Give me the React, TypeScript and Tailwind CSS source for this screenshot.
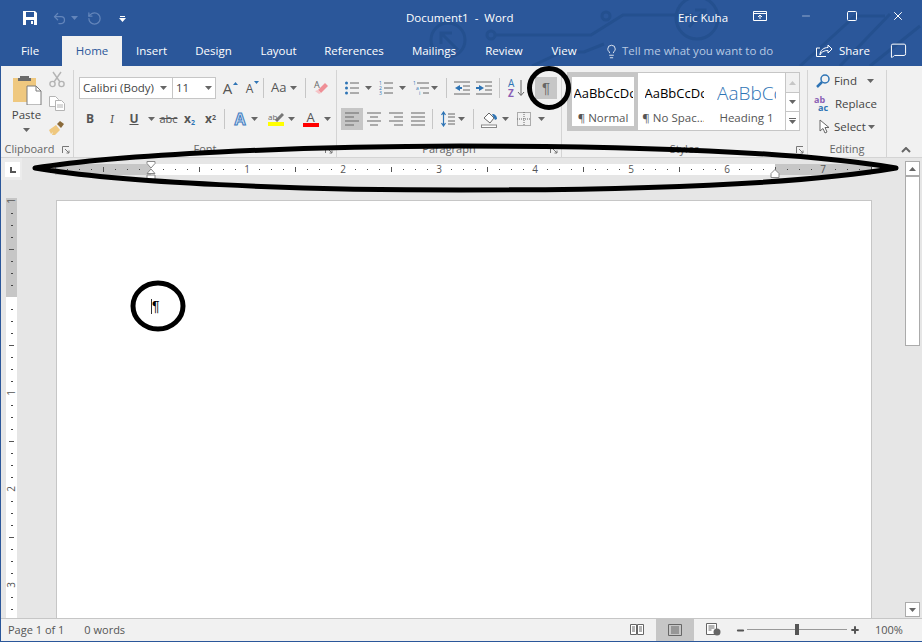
import React from 'react';
import { Undo2, RotateCcw, Lightbulb, MessageSquare, Minus, Plus, Square, X } from 'lucide-react';

const TABS = [
  { name: 'Insert', width: 'w-[59px]' },
  { name: 'Design', width: 'w-[65px]' },
  { name: 'Layout', width: 'w-[65px]' },
  { name: 'References', width: 'w-[86px]' },
  { name: 'Mailings', width: 'w-[74px]' },
  { name: 'Review', width: 'w-[66px]' },
  { name: 'View', width: 'w-[54px]' },
];

const Caret = ({ className = 'text-[#666]' }: { className?: string }) => (
  <svg width="7" height="4" viewBox="0 0 7 4" className={`shrink-0 ${className}`}>
    <path d="M0 0h7L3.5 4z" fill="currentColor" />
  </svg>
);

const Launcher = () => (
  <svg width="8" height="8" viewBox="0 0 8 8" className="shrink-0">
    <path d="M.5 7V.5H7M3 3l4 4M4.5 7H7V4.5" fill="none" stroke="#777" />
  </svg>
);

const Divider = ({ className = 'h-[22px]' }: { className?: string }) => <div className={`w-px bg-[#c6c6c6] shrink-0 ${className}`} />;

const Lines = ({ widths, width = 14 }: { widths: [number, number][]; width?: number }) => (
  <svg width={width} height="14" viewBox={`0 0 ${width} 14`}>
    {widths.map(([x, w], i) => (
      <rect key={i} x={x} y={1 + i * (12 / (widths.length - 1)) - 0.5} width={w} height="1" fill="#666" />
    ))}
  </svg>
);

const RibbonGroup = ({ label, width, launcher, labelClass = '', children }: { label: string; width: string; launcher?: boolean; labelClass?: string; children: React.ReactNode }) => (
  <div className={`${width} h-[88px] shrink-0 flex flex-col border-r border-[#d4d4d4] mt-[4px] relative`}>
    <div className="flex-1 min-h-0">{children}</div>
    <div className={`h-[17px] flex items-center justify-center text-[11px] text-[#666] ${labelClass}`}>{label}</div>
    {launcher && (
      <div className="absolute right-[3px] bottom-[4px] flex">
        <Launcher />
      </div>
    )}
  </div>
);

const Ruler = () => {
  const marks = [];
  for (let i = 0; i <= 68; i++) {
    const x = 12 * i;
    if (i === 0) continue;
    if (i % 8 === 0) continue;
    marks.push(i % 4 === 0 ? <rect key={i} x={x} y="3" width="1" height="5" fill="#555" /> : <rect key={i} x={x} y="5" width="1" height="1" fill="#444" />);
  }
  return (
    <svg width="816" height="11" viewBox="0 0 816 11" className="block overflow-visible">
      {marks}
      <text x="0" y="9" fontSize="10" fill="#555" textAnchor="middle">1</text>
      {[1, 2, 3, 4, 5, 6, 7].map(n => (
        <text key={n} x={96 + n * 96} y="9" fontSize="10" fill="#555" textAnchor="middle">{n}</text>
      ))}
    </svg>
  );
};

const VerticalRuler = () => {
  const marks = [];
  for (let i = 1; i <= 36; i++) {
    const y = 3 + 12 * i;
    if (i % 8 === 0) continue;
    marks.push(i % 4 === 0 ? <rect key={i} x="3" y={y} width="5" height="1" fill="#555" /> : <rect key={i} x="5" y={y} width="2" height="1" fill="#444" />);
  }
  return (
    <svg width="11" height="421" viewBox="0 0 11 421" className="block overflow-visible">
      {marks}
      {[1, 2, 3].map(n => (
        <text key={n} x="0" y="0" fontSize="10" fill="#555" textAnchor="middle" transform={`translate(9 ${99 + n * 96}) rotate(-90)`}>{n}</text>
      ))}
      <text x="0" y="0" fontSize="10" fill="#555" textAnchor="middle" transform="translate(9 3) rotate(-90)">1</text>
    </svg>
  );
};

const Clipboard = () => (
  <RibbonGroup label="Clipboard" width="w-[73px]" launcher labelClass="pr-[15px]">
    <div className="flex h-full">
      <div className="w-[45px] flex flex-col items-center pt-[5px] pl-[6px]">
        <svg width="30" height="30" viewBox="0 0 30 30">
          <path d="M1 3h23v24H1z" fill="#efc87f" />
          <path d="M8 3V1h9v2h2v3H6V3z" fill="#6b6b6b" />
          <path d="M15 11h9l5 5v14H15z" fill="#fff" stroke="#7a7a7a" />
          <path d="M24 11v5h5" fill="none" stroke="#7a7a7a" />
        </svg>
        <div className="text-[11.5px] leading-[16px] mt-[2px] text-[#444]">Paste</div>
        <div className="mt-[5px]"><Caret /></div>
      </div>
      <div className="flex flex-col items-center pl-[3px] pt-[1px]">
        <svg width="16" height="17" viewBox="0 0 16 17" fill="none" stroke="#b4b4b4" strokeWidth="1.4">
          <circle cx="3.5" cy="13" r="2.6" />
          <circle cx="12.5" cy="13" r="2.6" />
          <path d="M5 11 12 1M11 11 4 1" />
        </svg>
        <svg width="16" height="15" viewBox="0 0 16 15" fill="#fff" stroke="#b4b4b4" className="mt-[8px]">
          <path d="M.5.5h6l3 3v7H.5z" />
          <path d="M6.5 4.5h6l3 3v7h-9z" />
          <path d="M8 9h6M8 11h6" />
        </svg>
        <svg width="16" height="15" viewBox="0 0 16 15" className="mt-[9px]">
          <path d="M0 10 7 5l4 5-5 5H3l1-3-2 2z" fill="#efc87f" />
          <path d="M8 4l3-3 4 3-3 4z" fill="#8a6a3a" />
        </svg>
      </div>
    </div>
  </RibbonGroup>
);

const Font = () => (
  <RibbonGroup label="Font" width="w-[263px]" launcher>
    <div className="flex items-center h-[22px] mt-[7px] pl-[5px]">
      <div className="w-[94px] h-[22px] bg-white border border-[#c6c6c6] flex items-center pl-[3px] pr-[5px] justify-between text-[11.5px] text-[#444]">
        <span>Calibri (Body)</span><Caret />
      </div>
      <div className="w-[43px] h-[22px] bg-white border border-[#c6c6c6] border-l-0 flex items-center pl-[3px] pr-[3px] justify-between text-[11.5px] text-[#444]">
        <span>11</span><Caret />
      </div>
      <div className="w-[23px] text-center text-[15px] leading-none text-[#555] relative">
        A
        <svg width="5" height="3" viewBox="0 0 5 3" className="absolute right-[1px] top-[1px]"><path d="M0 3h5L2.500 0z" fill="#2e74b5" /></svg>
      </div>
      <div className="w-[21px] text-center text-[12px] leading-none text-[#555] relative mt-[2px]">
        A
        <svg width="5" height="3" viewBox="0 0 5 3" className="absolute right-[1px] top-[-2px]"><path d="M0 0h5L2.500 3z" fill="#2e74b5" /></svg>
      </div>
      <Divider className="h-[20px] ml-[3px]" />
      <span className="ml-[7px] text-[13px] text-[#555]">Aa</span>
      <span className="ml-[4px]"><Caret /></span>
      <Divider className="h-[20px] ml-[8px]" />
      <svg width="16" height="16" viewBox="0 0 16 16" className="ml-[8px] overflow-visible">
        <path d="M7 13 14 6l-3-3-7 7z" fill="#ef8f96" />
        <path d="M1 11l3-1 3 3-2 1z" fill="#f5c3c6" />
        <text x="0" y="8" fontSize="9" fill="#666">A</text>
      </svg>
    </div>
    <div className="flex items-center h-[22px] mt-[9px] pl-[5px] text-[#555]">
      <span className="w-[22px] text-center text-[12px] font-bold">B</span>
      <span className="w-[22px] text-center text-[12px] italic font-serif">I</span>
      <span className="w-[22px] text-center text-[12px] font-bold underline">U</span>
      <span className="ml-[3px] mr-[3px]"><Caret /></span>
      <span className="w-[21px] text-center text-[11px] line-through">abc</span>
      <span className="w-[21px] text-center text-[12px] font-bold">x<sub className="text-[7px] text-[#2e74b5]">2</sub></span>
      <span className="w-[21px] text-center text-[12px] font-bold">x<sup className="text-[7px]">2</sup></span>
      <Divider className="h-[20px] ml-[3px]" />
      <span className="ml-[8px] w-[14px] text-center text-[16px] font-bold leading-none text-[#cfe0f3] [-webkit-text-stroke:1px_#3f7cc0]">A</span>
      <span className="ml-[4px]"><Caret /></span>
      <div className="ml-[9px] w-[17px] flex flex-col items-center">
        <svg width="16" height="10" viewBox="0 0 16 10"><text x="0" y="8" fontSize="8" fill="#666">ab</text><path d="M8 9l7-7" stroke="#777" strokeWidth="3" /></svg>
        <div className="w-[16px] h-[4px] bg-[#ffff00]" />
      </div>
      <span className="ml-[4px]"><Caret /></span>
      <div className="ml-[7px] w-[17px] flex flex-col items-center">
        <span className="text-[13px] leading-[11px] text-[#555]">A</span>
        <div className="w-[16px] h-[4px] bg-[#ff0000]" />
      </div>
      <span className="ml-[5px]"><Caret /></span>
    </div>
  </RibbonGroup>
);

const Paragraph = () => (
  <RibbonGroup label="Paragraph" width="w-[225px]" launcher>
    <div className="flex items-center h-[22px] mt-[7px] pl-[8px]">
      <svg width="14" height="14" viewBox="0 0 14 14">
        <circle cx="1.500" cy="2" r="1.500" fill="#2e74b5" /><circle cx="1.500" cy="7" r="1.500" fill="#2e74b5" /><circle cx="1.500" cy="12" r="1.500" fill="#2e74b5" />
        <path d="M5 2h9M5 7h9M5 12h9" stroke="#666" />
      </svg>
      <span className="ml-[6px]"><Caret /></span>
      <svg width="14" height="14" viewBox="0 0 14 14" className="ml-[7px] overflow-visible">
        <text x="0" y="4" fontSize="5" fill="#2e74b5">1</text><text x="0" y="9" fontSize="5" fill="#2e74b5">2</text><text x="0" y="14" fontSize="5" fill="#2e74b5">3</text>
        <path d="M5 2h9M5 7h9M5 12h9" stroke="#666" />
      </svg>
      <span className="ml-[6px]"><Caret /></span>
      <svg width="16" height="14" viewBox="0 0 16 14" className="ml-[7px] overflow-visible">
        <text x="0" y="4" fontSize="5" fill="#2e74b5">1</text><text x="3" y="9" fontSize="5" fill="#2e74b5">a</text><text x="6" y="14" fontSize="5" fill="#2e74b5">i</text>
        <path d="M4 2h12M7 7h9M10 12h6" stroke="#666" />
      </svg>
      <span className="ml-[2px]"><Caret /></span>
      <Divider className="h-[20px] ml-[8px]" />
      <svg width="16" height="14" viewBox="0 0 16 14" className="ml-[7px]">
        <path d="M6 4 1 7l5 3z" fill="#2e74b5" /><path d="M3 7h5" stroke="#2e74b5" strokeWidth="2" />
        <path d="M0 1h16M9 5h7M9 9h7M0 13h16" stroke="#666" />
      </svg>
      <svg width="16" height="14" viewBox="0 0 16 14" className="ml-[6px]">
        <path d="M3 4l5 3-5 3z" fill="#2e74b5" /><path d="M0 7h5" stroke="#2e74b5" strokeWidth="2" />
        <path d="M0 1h16M9 5h7M9 9h7M0 13h16" stroke="#666" />
      </svg>
      <Divider className="h-[20px] ml-[7px]" />
      <div className="ml-[8px] w-[17px] h-[22px] relative flex">
        <svg width="17" height="20" viewBox="0 0 17 20" className="mt-[1px] overflow-visible">
          <text x="0" y="9" fontSize="10" fill="#2e74b5">A</text>
          <text x="0" y="19" fontSize="10" fontWeight="bold" fill="#8a5fb5">Z</text>
          <path d="M13 2v15M10 14l3 3.500 3-3.500" fill="none" stroke="#666" />
        </svg>
      </div>
      <div className="ml-[10px] w-[22px] h-[22px] bg-[#c6c6c6] flex items-center justify-center font-['Liberation_Sans',sans-serif] text-[15px] text-[#666]">¶</div>
    </div>
    <div className="flex items-center h-[22px] mt-[9px] pl-[4px]">
      <div className="w-[22px] h-[22px] bg-[#c6c6c6] flex items-center justify-center">
        <Lines widths={[[0, 14], [0, 9], [0, 14], [0, 9]]} />
      </div>
      <div className="w-[22px] flex justify-center"><Lines widths={[[0, 14], [3, 8], [0, 14], [3, 8]]} /></div>
      <div className="w-[22px] flex justify-center"><Lines widths={[[0, 14], [5, 9], [0, 14], [5, 9]]} /></div>
      <div className="w-[22px] flex justify-center"><Lines widths={[[0, 14], [0, 14], [0, 14], [0, 14]]} /></div>
      <Divider className="h-[20px] ml-[3px]" />
      <svg width="14" height="16" viewBox="0 0 14 16" className="ml-[8px]">
        <path d="M2.500 1v14M.5 4l2-3 2 3M.5 12l2 3 2-3" fill="none" stroke="#2e74b5" strokeWidth="1.200" />
        <path d="M7 3h7M7 6h7M7 10h7M7 13h7" stroke="#666" />
      </svg>
      <span className="ml-[3px]"><Caret /></span>
      <Divider className="h-[20px] ml-[8px]" />
      <svg width="17" height="17" viewBox="0 0 17 17" className="ml-[7px]">
        <path d="M3 7l5-5 5 5-4 5z" fill="#fff" stroke="#666" />
        <path d="M11 3c3 0 5 2 5 5l-2 1z" fill="#2e74b5" />
        <rect x=".5" y="14" width="15" height="2.500" fill="#fff" stroke="#888" />
      </svg>
      <span className="ml-[4px]"><Caret /></span>
      <svg width="14" height="14" viewBox="0 0 14 14" className="ml-[8px]" fill="none" stroke="#666" strokeDasharray="1 1">
        <rect x=".5" y=".5" width="13" height="13" /><path d="M7 0v14M0 7h14" />
      </svg>
      <span className="ml-[7px]"><Caret /></span>
    </div>
  </RibbonGroup>
);

const Styles = () => (
  <RibbonGroup label="Styles" width="w-[246px]" launcher>
    <div className="ml-[5px] mt-[2px] w-[233px] h-[59px] bg-white border border-[#c6c6c6] flex">
      <div className="w-[70px] h-full border-[4px] border-[#c6c6c6] flex flex-col items-center overflow-hidden">
        <div className="h-[33px] w-[59px] overflow-hidden whitespace-nowrap text-[13px] text-black leading-[33px]">AaBbCcDc</div>
        <div className="text-[11.5px] leading-[16px] text-[#555]">¶ Normal</div>
      </div>
      <div className="w-[66px] h-full flex flex-col items-center pt-[4px] pl-[6px] overflow-hidden">
        <div className="h-[33px] w-[59px] overflow-hidden whitespace-nowrap text-[13px] text-black leading-[33px]">AaBbCcDc</div>
        <div className="text-[11.5px] leading-[16px] text-[#555] whitespace-nowrap">¶ No Spac...</div>
      </div>
      <div className="w-[81px] h-full flex flex-col items-center pt-[4px] pl-[4px] overflow-hidden">
        <div className="h-[33px] w-[59px] overflow-hidden whitespace-nowrap text-[19px] font-light text-[#2e74b5] leading-[33px]">AaBbCc</div>
        <div className="text-[11.5px] leading-[16px] text-[#555] whitespace-nowrap">Heading 1</div>
      </div>
      <div className="flex-1 flex flex-col border-l border-[#c6c6c6]">
        <div className="h-[20px] bg-[#f1f1f1] border-b border-[#c6c6c6] flex items-center justify-center"><svg width="7" height="4" viewBox="0 0 7 4"><path d="M0 4h7L3.500 0z" fill="#c6c6c6" /></svg></div>
        <div className="h-[19px] border-b border-[#c6c6c6] flex items-center justify-center"><Caret /></div>
        <div className="flex-1 flex flex-col items-center justify-center gap-[1px]">
          <div className="w-[7px] h-px bg-[#666]" />
          <Caret />
        </div>
      </div>
    </div>
  </RibbonGroup>
);

const Editing = () => (
  <RibbonGroup label="Editing" width="w-[79px]">
    <div className="flex flex-col pl-[8px] -mt-[1px] text-[11.5px] text-[#444]">
      <div className="flex items-center h-[23px]">
        <svg width="14" height="14" viewBox="0 0 14 14" fill="none" stroke="#2e74b5" strokeWidth="1.500">
          <circle cx="9" cy="5" r="4" /><path d="M6 8l-5 5" strokeWidth="2.500" />
        </svg>
        <span className="ml-[4px]">Find</span>
        <span className="ml-[10px]"><Caret /></span>
      </div>
      <div className="flex items-center h-[23px] -ml-[2px]">
        <svg width="17" height="17" viewBox="0 0 17 17" className="overflow-visible">
          <text x="0" y="8" fontSize="9" fill="#8a5fb5" fontWeight="bold">ab</text>
          <text x="4" y="16" fontSize="9" fill="#2e74b5" fontWeight="bold">ac</text>
        </svg>
        <span className="ml-[4px]">Replace</span>
      </div>
      <div className="flex items-center h-[23px] pl-[3px]">
        <svg width="11" height="15" viewBox="0 0 11 15"><path d="M1 1v11l3-2.500 2 4.500 2-1-2-4.500h4z" fill="#fff" stroke="#666" /></svg>
        <span className="ml-[4px]">Select</span>
        <span className="ml-[2px]"><Caret /></span>
      </div>
    </div>
  </RibbonGroup>
);

export default function App() {
  return (
    <div className="w-[922px] h-[642px] relative overflow-hidden flex flex-col bg-[#e6e6e6] border-l border-b border-[#2b579a] font-['Open_Sans','Noto_Sans',sans-serif]">
      <header className="h-[66px] -ml-px shrink-0 bg-[#2b579a] relative text-white">
        <svg width="922" height="66" viewBox="0 0 922 66" className="absolute inset-0" fill="none" stroke="#24508f" strokeWidth="3">
          <circle cx="448" cy="40" r="17" />
          <path d="M458 50 442 34M441 44V33h11" />
          <circle cx="491" cy="35" r="4" />
          <path d="M495 35h96l32 -20h70M532 66l30-14h22l20-8" />
          <circle cx="606" cy="16" r="4" />
          <circle cx="697" cy="18" r="21" />
          <path d="M689 27l16-17M695 10h10v10" />
          <path d="M800 66l55-50h30M840 66l50-52M870 66l50-40" />
        </svg>
        <div className="relative h-[36px] flex items-center">
          <svg width="16" height="16" viewBox="0 0 16 16" className="ml-[22px] text-white">
            <path d="M1 1h12l2 2v12H1z" fill="#fff" />
            <path d="M4 2h8v5H4z" fill="#2b579a" />
            <path d="M4 10h8v5H4z" fill="#2b579a" />
            <path d="M9 11h2v3H9z" fill="#fff" />
          </svg>
          <Undo2 size={15} className="ml-[14px] text-[#6385ba]" strokeWidth={2} />
          <span className="ml-[4px]"><Caret className="text-[#6385ba]" /></span>
          <RotateCcw size={15} className="ml-[9px] text-[#6385ba]" strokeWidth={2} />
          <div className="ml-[17px] flex flex-col items-center gap-[1px] mt-[1px]">
            <div className="w-[5px] h-px bg-white" />
            <Caret className="text-white" />
          </div>
          <div className="absolute left-[406px] top-[9px] text-[11.5px] leading-[17px] whitespace-pre">Document1  -  Word</div>
          <div className="absolute left-[678px] top-[9px] text-[11.5px] leading-[17px]">Eric Kuha</div>
          <svg width="14" height="10" viewBox="0 0 14 10" className="absolute left-[753px] top-[11px]" fill="none" stroke="#fff">
            <path d="M.5.500h13v9H.5zM.5 2.500h13M7 8V4M5 6l2-2 2 2" />
          </svg>
          <Minus size={12} strokeWidth={1} className="absolute left-[800px] top-[10px]" />
          <Square size={12} strokeWidth={1} absoluteStrokeWidth className="absolute left-[846px] top-[10px]" />
          <X size={14} strokeWidth={1} absoluteStrokeWidth className="absolute left-[891px] top-[9px]" />
        </div>
        <nav className="relative h-[30px] flex text-[11.5px]">
          <div className="ml-[6px] mr-[8px] w-[48px] flex items-center justify-center">File</div>
          <div className="w-[60px] bg-[#f1f1f1] text-[#2b579a] flex items-center justify-center">Home</div>
          {TABS.map(tab => (
            <div key={tab.name} className={`${tab.width} flex items-center justify-center`}>{tab.name}</div>
          ))}
          <div className="flex items-center ml-[13px] text-[#b7c9e3]">
            <Lightbulb size={15} strokeWidth={1.300} className="text-white" />
            <span className="ml-[3px]">Tell me what you want to do</span>
          </div>
          <div className="absolute left-[816px] top-[6px] flex items-center">
            <svg width="17" height="16" viewBox="0 0 17 16" fill="none" stroke="#fff">
              <path d="M12 2l4 4-4 4V7.500C8 7.500 5 9 4 12c0-5 4-7.500 8-7.500zM10 13.500H.5V5H4" />
            </svg>
            <span className="ml-[6px]">Share</span>
          </div>
          <MessageSquare size={17} strokeWidth={1} absoluteStrokeWidth className="absolute left-[890px] top-[6px]" />
        </nav>
      </header>

      <section className="h-[92px] shrink-0 bg-[#f1f1f1] border-b border-[#d4d4d4] flex relative">
        <Clipboard />
        <Font />
        <Paragraph />
        <Styles />
        <Editing />
        <svg width="10" height="6" viewBox="0 0 10 6" className="absolute left-[900px] top-[81px]" fill="none" stroke="#666" strokeWidth="2">
          <path d="M1 5l4-4 4 4" />
        </svg>
      </section>

      <main className="flex-1 min-h-0 flex">
        <div className="flex-1 min-w-0 flex flex-col">
          <div className="h-[42px] shrink-0 flex relative">
            <div className="w-[21px] h-[22px] bg-[#ececec] flex items-start justify-start pl-[4px] pt-[4px]">
              <div className="w-[15px] h-[15px] bg-white flex items-center justify-center">
                <div className="w-[6px] h-[6px] border-l-2 border-b-2 border-[#555]" />
              </div>
            </div>
            <div className="ml-[33px] mt-[6px] w-[816px] h-[11px] bg-white relative">
              <div className="absolute left-0 top-0 w-[96px] h-full bg-[#c6c6c6]" />
              <div className="absolute right-0 top-0 w-[96px] h-full bg-[#c6c6c6]" />
              <div className="relative"><Ruler /></div>
              <svg width="10" height="20" viewBox="0 0 10 20" className="absolute left-[91px] top-[-3px]" fill="#fff" stroke="#888">
                <path d="M1 .5h8v2L5 7 1 2.500zM1 12.500l4-4.500 4 4.500v0H1zM1 14h8v6H1z" />
              </svg>
              <svg width="10" height="9" viewBox="0 0 10 9" className="absolute left-[715px] top-[5px]" fill="#fff" stroke="#888">
                <path d="M1 8.500V4.500l4-4 4 4v4z" />
              </svg>
            </div>
          </div>
          <div className="flex-1 min-h-0 flex">
            <div className="ml-[5px] mt-[-2px] w-[11px] h-[423px] bg-white relative shrink-0">
              <div className="absolute left-0 top-0 w-full h-[99px] bg-[#c6c6c6]" />
              <div className="relative"><VerticalRuler /></div>
            </div>
            <div className="ml-[39px] w-[816px] bg-white border-l border-t border-r border-[#c6c6c6] pl-[94px] pt-[97px] relative">
              <div className="flex items-center h-[16px] font-['Liberation_Sans',sans-serif] text-[14px] leading-none text-black">
                <div className="w-px h-[15px] bg-[#333]" />
                <span>¶</span>
              </div>
            </div>
          </div>
        </div>
        <aside className="w-[17px] shrink-0 pt-[3px] flex flex-col">
          <div className="w-[15px] h-[185px] bg-white border border-[#ababab] flex flex-col">
            <div className="h-[15px] border-b-2 border-[#ababab] flex items-center justify-center">
              <svg width="7" height="4" viewBox="0 0 7 4"><path d="M0 4h7L3.500 0z" fill="#666" /></svg>
            </div>
          </div>
          <div className="flex-1" />
          <div className="w-[15px] h-[15px] mb-px bg-white border border-[#ababab] flex items-center justify-center"><Caret /></div>
        </aside>
      </main>

      <footer className="h-[23px] shrink-0 bg-[#f1f1f1] border-t border-[#c6c6c6] flex items-center text-[11px] text-[#555] relative">
        <span className="ml-[7px]">Page 1 of 1</span>
        <span className="ml-[20px]">0 words</span>
        <svg width="14" height="12" viewBox="0 0 14 12" className="absolute left-[629px] top-[5px]" fill="#fff" stroke="#666">
          <path d="M.5.500h6v10h-6zM7.500.500h6v10h-6zM2 3h3M2 5h3M2 7h3M9 3h3M9 5h3M9 7h3" />
        </svg>
        <div className="absolute left-[655px] top-0 w-[38px] h-full bg-[#c6c6c6] flex items-center justify-center">
          <svg width="14" height="12" viewBox="0 0 14 12" fill="none" stroke="#666">
            <path d="M.5.500h13v11H.5zM3 3h8M3 5h8M3 7h8M3 9h8" />
          </svg>
        </div>
        <svg width="15" height="13" viewBox="0 0 15 13" className="absolute left-[705px] top-[4px]">
          <path d="M.5.500h10v11H.5zM2.500 3h6M2.500 5h6M2.500 7h3" fill="#fff" stroke="#666" />
          <circle cx="11" cy="9" r="3.500" fill="#666" />
        </svg>
        <Minus size={9} strokeWidth={2} absoluteStrokeWidth className="absolute left-[735px] top-[7px] text-[#555]" />
        <div className="absolute left-[746px] top-[10px] w-[100px] h-px bg-[#999]" />
        <div className="absolute left-[794px] top-[5px] w-[4px] h-[11px] bg-[#555]" />
        <Plus size={10} strokeWidth={2} absoluteStrokeWidth className="absolute left-[849px] top-[6px] text-[#555]" />
        <span className="absolute left-[874px] top-[3px]">100%</span>
      </footer>

      <svg width="922" height="642" viewBox="0 0 922 642" className="absolute left-[-1px] top-0 pointer-events-none">
        <path fill="none" stroke="#000" strokeWidth="5" strokeLinejoin="round" d="M35 168C120 154 300 146.500 460 146C640 146 800 152 896 168C800 184.500 640 190 460 190C300 190 120 183 35 168Z" />
        <circle cx="549" cy="88" r="19.500" fill="none" stroke="#000" strokeWidth="5" />
        <ellipse cx="158" cy="306" rx="25" ry="23" fill="none" stroke="#000" strokeWidth="5" />
      </svg>
    </div>
  );
}
